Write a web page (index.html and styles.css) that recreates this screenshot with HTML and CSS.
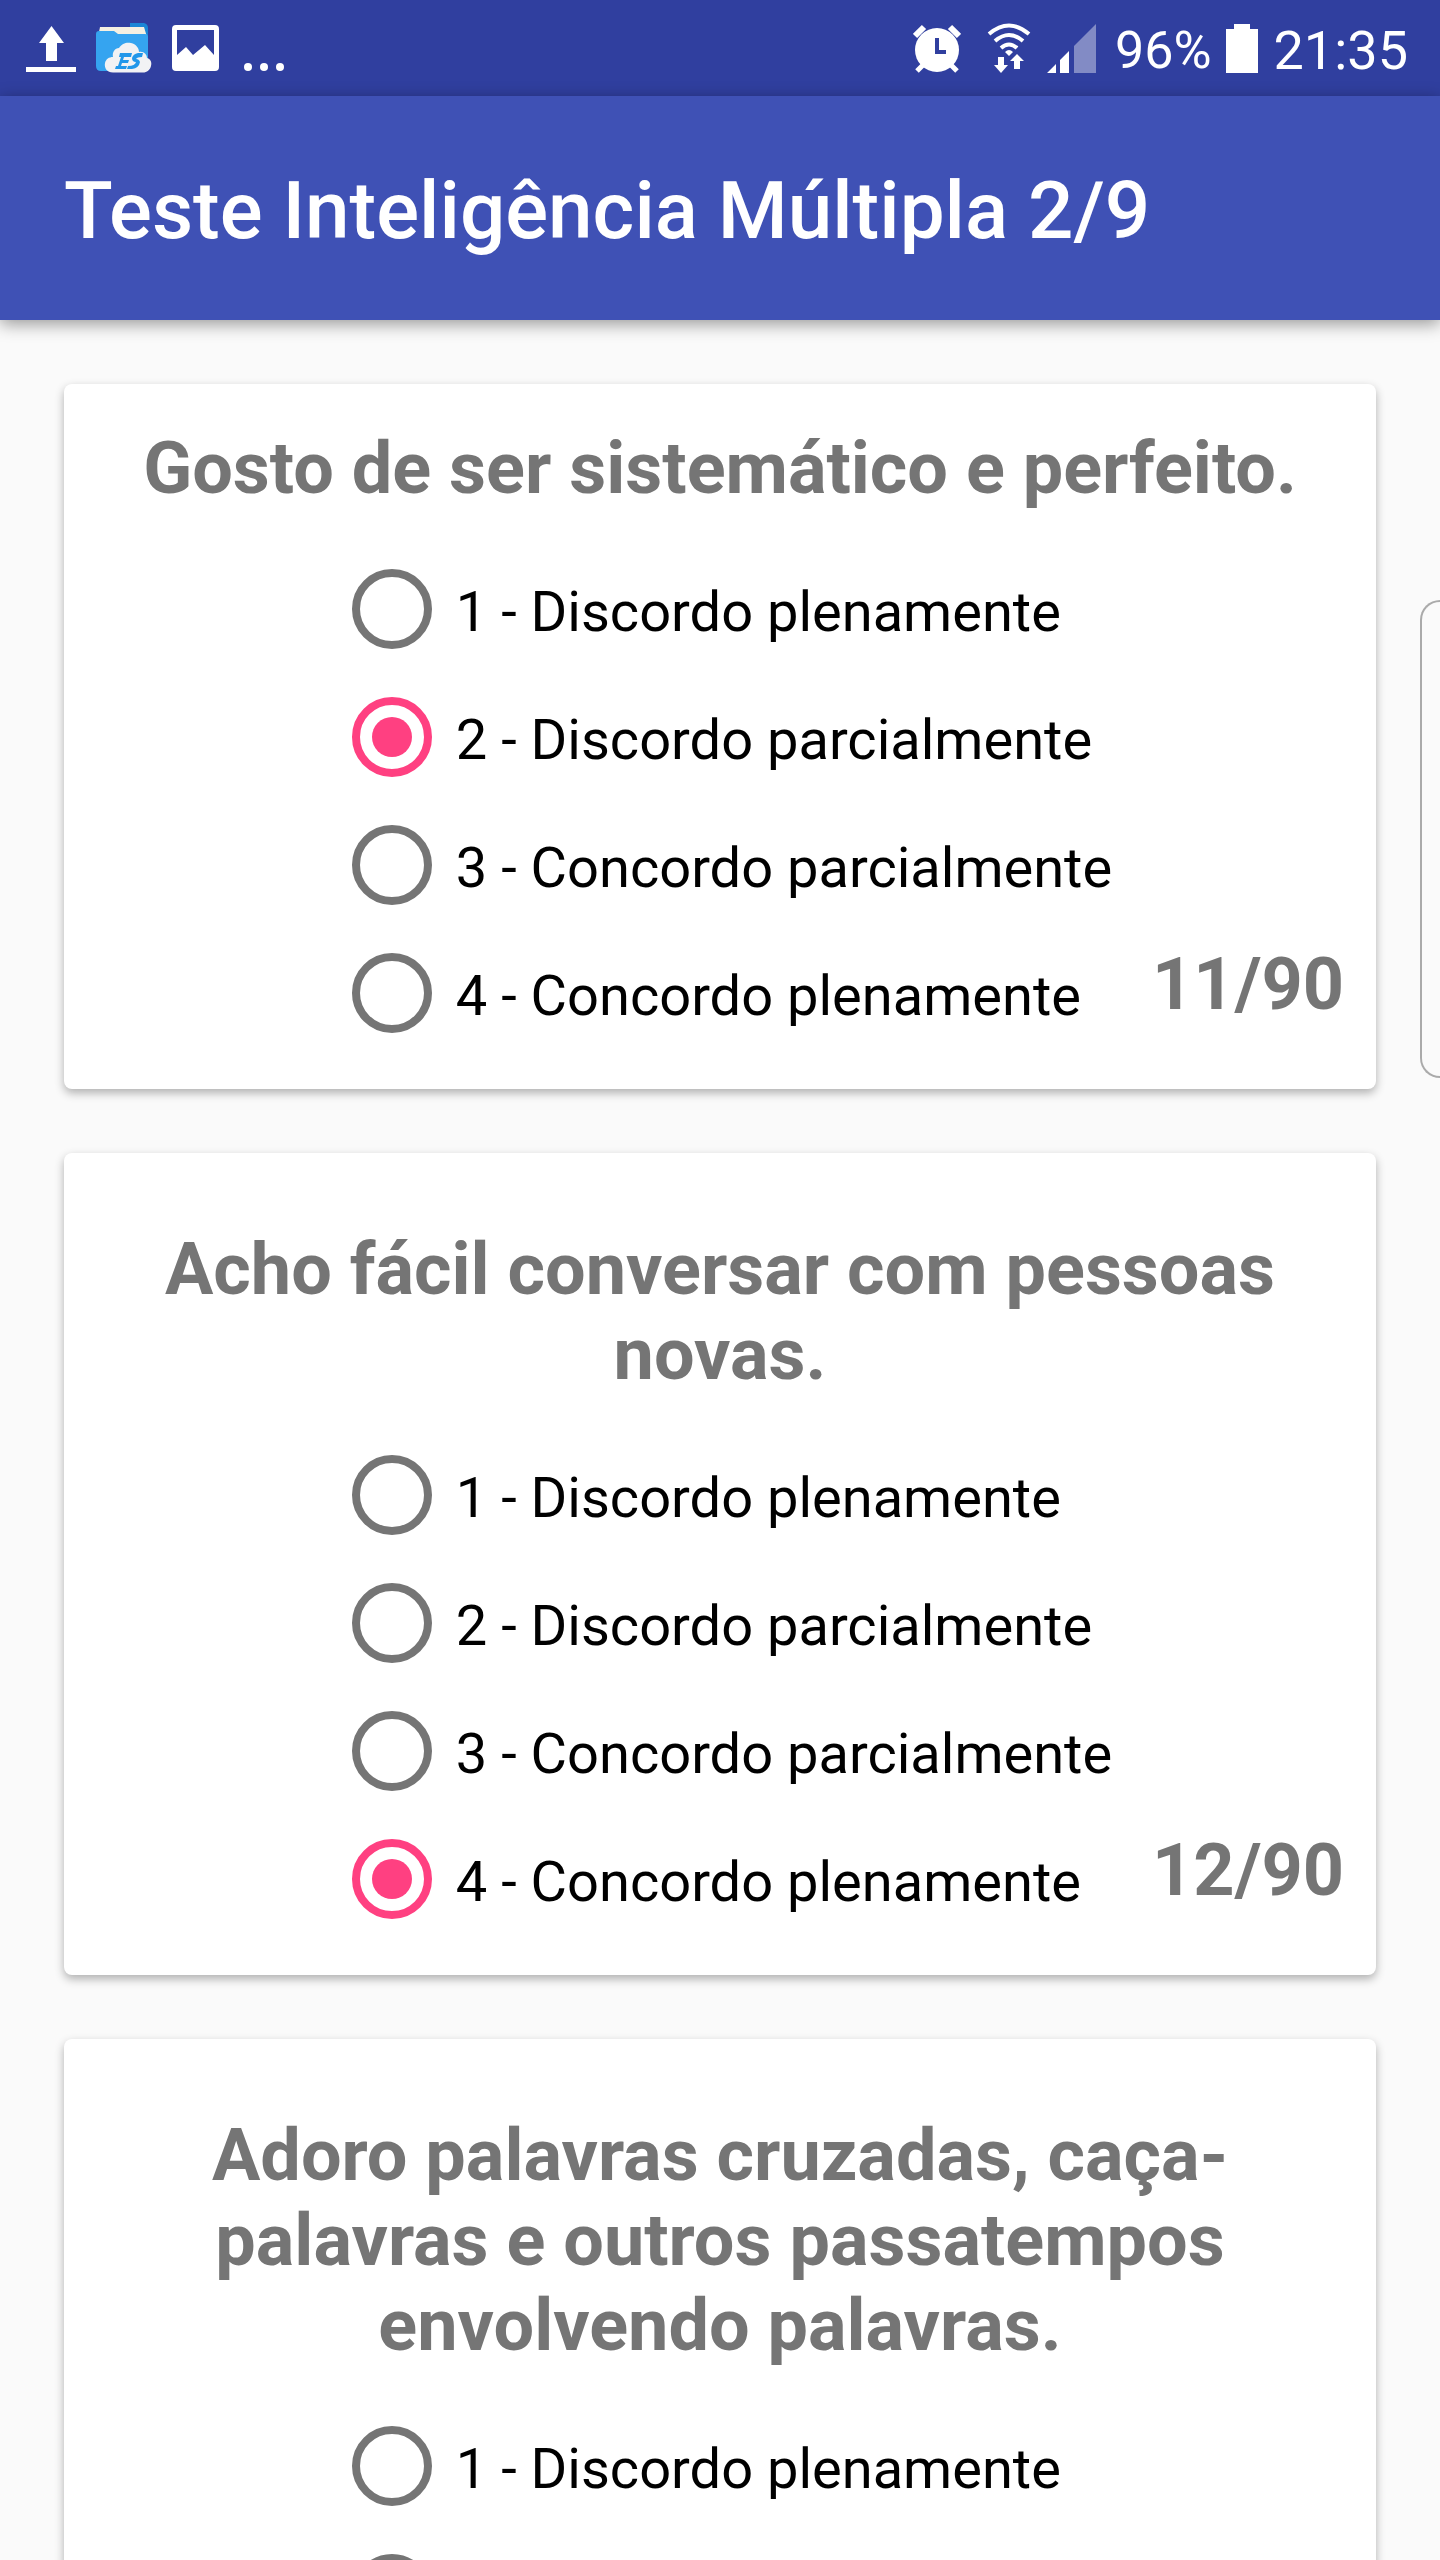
FILE: index.html
```html
<!DOCTYPE html>
<html lang="pt-BR">
<head>
    <meta charset="UTF-8">
    <meta name="viewport" content="width=device-width, initial-scale=1.0">
    <title>Teste Inteligência Múltipla</title>
    <link rel="stylesheet" href="styles.css">
</head>
<body>
    <div class="status-bar">
        <div class="notifications">
            <svg width="50" height="50" viewBox="0 0 50 50" fill="#fff">
                <path d="M25.500 3L38 20H31V38H20V20H13zM0 44H50V49H0z"/>
            </svg>
            <svg width="56" height="50" viewBox="0 0 56 50">
                <path d="M34 0H48Q52 1 52 5V20H34z" fill="#1b86d6"/>
                <path d="M4 4H48L51 14H2z" fill="#f5f0e2"/>
                <path d="M0 11Q0 8 3 8H18L22 11H49Q52 11 52 14V40Q52 48 45 48H5Q0 48 0 43z" fill="#35a4f0"/>
                <path d="M17 49.500C11 49.500 8 45 9 40C10 36 13 34 17 34C16 29 19 25 23 25C26 20 31 19 35 20C40 21 43 25 43 29C48 28 51 32 51 35C55 36 56 40 55 43C54 47 51 49.500 47 49.500z" fill="#f2f2f4"/>
                <path d="M24 30H36L35 34H28L27 37H33L32 40H26L25 43H31L30 46H19L20 43H22L25 34H23zM47 30H42Q37 31 36 35Q36 39 40 39Q39 43 32 43L31 46H36Q43 45 44 39Q43 36 40 36Q41 34 46 34z" fill="#2297ea"/>
            </svg>
            <svg width="48" height="46" viewBox="0 0 48 46" fill="#fff">
                <path fill-rule="evenodd" d="M4 0H43Q47 0 47 4V42Q47 46 43 46H4Q0 46 0 42V4Q0 0 4 0zM5 5V30L14 22L21 30L33 20L42 30V5z"/>
            </svg>
            <svg class="more" width="40" height="8" viewBox="0 0 40 8" fill="#fff">
                <circle cx="4" cy="4" r="4"/><circle cx="20" cy="4" r="4"/><circle cx="36" cy="4" r="4"/>
            </svg>
        </div>
        <div class="system">
            <svg class="alarm" width="48" height="50" viewBox="0 0 48 50">
                <path d="M2 13L11 4M46 13L37 4" stroke="#fff" stroke-width="6"/>
                <path d="M4 48L12 40M44 48L36 40" stroke="#fff" stroke-width="5"/>
                <circle cx="24" cy="27" r="22" fill="#fff"/>
                <path d="M24 15V29H33" fill="none" stroke="#303f9f" stroke-width="4"/>
            </svg>
            <svg class="wifi" width="44" height="50" viewBox="0 0 44 50" fill="none" stroke="#fff" stroke-width="4">
                <path d="M2 11Q22 -6 42 11M8 18Q22 6 36 18M14 25Q22 18 30 25"/>
                <path d="M22 33L18 29Q22 25 26 29zM11 34H17V42H21L14 50L7 42H11zM27 46V38H23L30 31L37 38H33V46z" fill="#fff" stroke="none"/>
            </svg>
            <svg class="signal" width="50" height="49" viewBox="0 0 50 49" fill="#fff">
                <path d="M0 49L9 40V49zM13 49V36L22 27V49z"/>
                <path d="M27 49V22L49 0V49z" opacity=".4"/>
            </svg>
            <span class="percent">96%</span>
            <svg class="battery" width="32" height="49" viewBox="0 0 32 49" fill="#fff">
                <path d="M0 5H8V0H24V5H32V49H0z"/>
            </svg>
            <span class="clock">21:35</span>
        </div>
    </div>

    <header class="toolbar">
        <h1>Teste Inteligência Múltipla 2/9</h1>
    </header>

    <main class="questions">
        <form class="card first">
            <h2 id="q11">Gosto de ser sistemático e perfeito.</h2>
            <div class="answers">
                <div class="options" role="radiogroup" aria-labelledby="q11">
                    <label><input type="radio" name="q11" value="1">1 - Discordo plenamente</label>
                    <label><input type="radio" name="q11" value="2" checked>2 - Discordo parcialmente</label>
                    <label><input type="radio" name="q11" value="3">3 - Concordo parcialmente</label>
                    <label><input type="radio" name="q11" value="4">4 - Concordo plenamente</label>
                </div>
                <span class="counter">11/90</span>
            </div>
        </form>

        <form class="card">
            <h2 id="q12">Acho fácil conversar com pessoas novas.</h2>
            <div class="answers">
                <div class="options" role="radiogroup" aria-labelledby="q12">
                    <label><input type="radio" name="q12" value="1">1 - Discordo plenamente</label>
                    <label><input type="radio" name="q12" value="2">2 - Discordo parcialmente</label>
                    <label><input type="radio" name="q12" value="3">3 - Concordo parcialmente</label>
                    <label><input type="radio" name="q12" value="4" checked>4 - Concordo plenamente</label>
                </div>
                <span class="counter">12/90</span>
            </div>
        </form>

        <form class="card">
            <h2 id="q13">Adoro palavras cruzadas, caça-palavras e outros passatempos envolvendo palavras.</h2>
            <div class="answers">
                <div class="options" role="radiogroup" aria-labelledby="q13">
                    <label><input type="radio" name="q13" value="1">1 - Discordo plenamente</label>
                    <label><input type="radio" name="q13" value="2">2 - Discordo parcialmente</label>
                    <label><input type="radio" name="q13" value="3">3 - Concordo parcialmente</label>
                    <label><input type="radio" name="q13" value="4">4 - Concordo plenamente</label>
                </div>
                <span class="counter">13/90</span>
            </div>
        </form>
    </main>

    <div class="edge-handle"></div>
</body>
</html>
```
FILE: styles.css
```css
*{
    margin: 0;
    padding: 0;
    box-sizing: border-box;
}
body{
    display: flex;
    flex-direction: column;
    height: 100vh;
    overflow: hidden;
    background-color: #fafafa;
    font-family: Roboto, "Liberation Sans", sans-serif;
}

/* status bar */
.status-bar{
    flex: none;
    display: flex;
    justify-content: space-between;
    align-items: center;
    height: 96px;
    padding: 0 32px 0 26px;
    background-color: #303f9f;
    color: #fff;
}
.notifications,
.system{
    display: flex;
    align-items: center;
}
.notifications{
    gap: 20px;
}
.more{
    margin: 38px 0 0 4px;
}
.wifi{
    margin-left: 26px;
}
.signal{
    margin: 0 18px 0 16px;
}
.battery{
    margin: 0 16px 0 14px;
}
.percent{
    font-size: 52px;
}
.clock{
    font-size: 54px;
}
.percent,
.clock{
    padding-top: 4px;
}

/* toolbar */
.toolbar{
    flex: none;
    display: flex;
    align-items: center;
    height: 224px;
    padding: 6px 64px 0;
    background-color: #3f51b5;
    color: #fff;
    box-shadow: 0 4px 16px rgba(0, 0, 0, 0.4);
}
.toolbar h1{
    font-size: 80px;
    font-weight: 500;
}

/* questions */
.questions{
    flex: 1;
    min-height: 0;
    padding: 64px;
    overflow-y: auto;
    scrollbar-width: none;
}
.card{
    padding: 74px 32px 32px;
    margin-bottom: 64px;
    background-color: #fff;
    border-radius: 8px;
    box-shadow: 0 4px 10px rgba(0, 0, 0, 0.3);
}
.card.first{
    padding-top: 42px;
}
.card h2{
    margin-bottom: 34px;
    color: #757575;
    font-size: 72px;
    line-height: 85px;
    text-align: center;
}
.answers{
    display: grid;
    grid-template-columns: 1fr auto 1fr;
}
.options{
    grid-column: 2;
}
.options label{
    display: flex;
    align-items: center;
    height: 128px;
    padding-top: 6px;
    font-size: 56px;
    white-space: nowrap;
    cursor: pointer;
}
.options input{
    appearance: none;
    width: 80px;
    height: 80px;
    margin: 0 24px 6px;
    border: 8px solid #757575;
    border-radius: 50%;
    cursor: pointer;
}
.options input:checked{
    padding: 12px;
    border-color: #ff4081;
    background-color: #ff4081;
    background-clip: content-box;
}
.counter{
    justify-self: end;
    align-self: end;
    margin-bottom: 30px;
    color: #757575;
    font-size: 72px;
    font-weight: bold;
    line-height: 85px;
}

/* edge panel handle */
.edge-handle{
    position: fixed;
    top: 600px;
    right: 0;
    width: 20px;
    height: 478px;
    border: 2px solid #aaa;
    border-right: none;
    border-radius: 20px 0 0 20px;
}
```
